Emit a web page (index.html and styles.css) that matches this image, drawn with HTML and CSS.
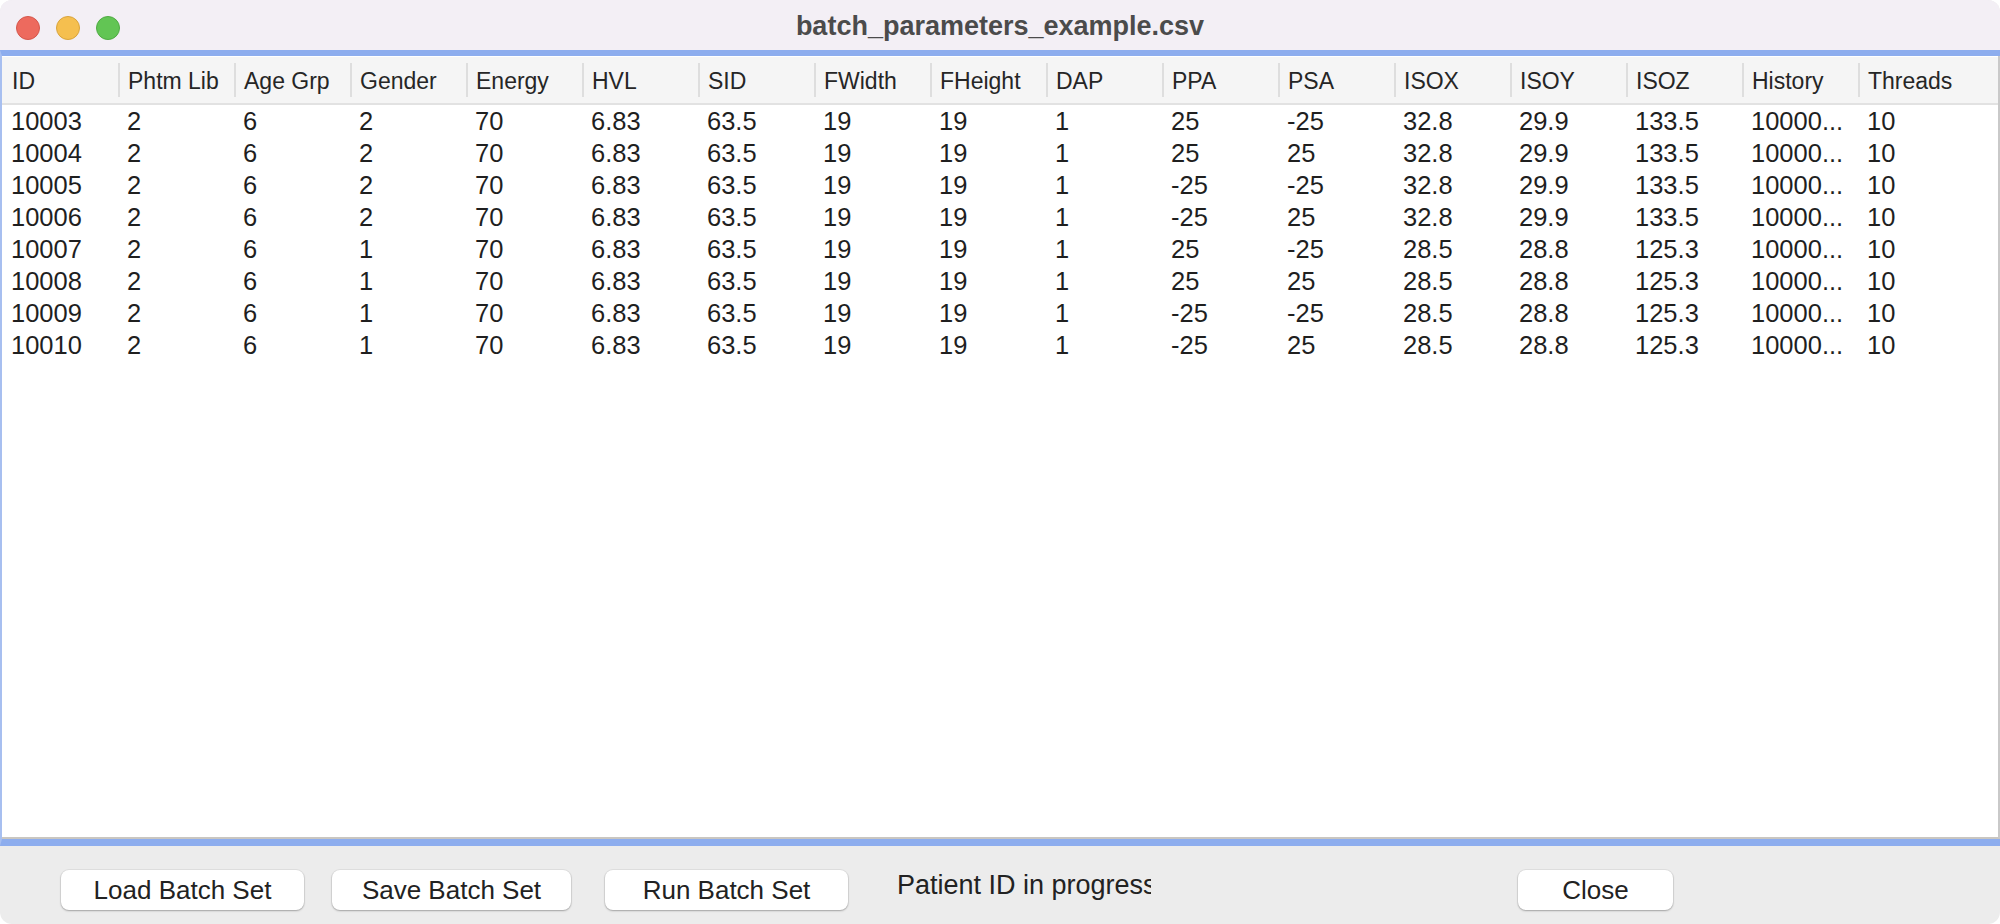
FILE: index.html
```html
<!DOCTYPE html>
<html>
<head>
<meta charset="utf-8">
<title>batch_parameters_example.csv</title>
<link rel="stylesheet" href="styles.css">
</head>
<body>
<div class="window">
  <div class="titlebar">
    <div class="lights">
      <span class="light red"></span>
      <span class="light yellow"></span>
      <span class="light green"></span>
    </div>
    <div class="title">batch_parameters_example.csv</div>
    <div></div>
  </div>
  <div class="tablewrap">
    <div class="table">
      <div class="row head">
        <div class="cell">ID</div><div class="cell">Phtm Lib</div><div class="cell">Age Grp</div><div class="cell">Gender</div><div class="cell">Energy</div><div class="cell">HVL</div><div class="cell">SID</div><div class="cell">FWidth</div><div class="cell">FHeight</div><div class="cell">DAP</div><div class="cell">PPA</div><div class="cell">PSA</div><div class="cell">ISOX</div><div class="cell">ISOY</div><div class="cell">ISOZ</div><div class="cell">History</div><div class="cell">Threads</div>
      </div>
      <div class="row"><div class="cell">10003</div><div class="cell">2</div><div class="cell">6</div><div class="cell">2</div><div class="cell">70</div><div class="cell">6.83</div><div class="cell">63.5</div><div class="cell">19</div><div class="cell">19</div><div class="cell">1</div><div class="cell">25</div><div class="cell">-25</div><div class="cell">32.8</div><div class="cell">29.9</div><div class="cell">133.5</div><div class="cell">10000...</div><div class="cell">10</div></div>
      <div class="row"><div class="cell">10004</div><div class="cell">2</div><div class="cell">6</div><div class="cell">2</div><div class="cell">70</div><div class="cell">6.83</div><div class="cell">63.5</div><div class="cell">19</div><div class="cell">19</div><div class="cell">1</div><div class="cell">25</div><div class="cell">25</div><div class="cell">32.8</div><div class="cell">29.9</div><div class="cell">133.5</div><div class="cell">10000...</div><div class="cell">10</div></div>
      <div class="row"><div class="cell">10005</div><div class="cell">2</div><div class="cell">6</div><div class="cell">2</div><div class="cell">70</div><div class="cell">6.83</div><div class="cell">63.5</div><div class="cell">19</div><div class="cell">19</div><div class="cell">1</div><div class="cell">-25</div><div class="cell">-25</div><div class="cell">32.8</div><div class="cell">29.9</div><div class="cell">133.5</div><div class="cell">10000...</div><div class="cell">10</div></div>
      <div class="row"><div class="cell">10006</div><div class="cell">2</div><div class="cell">6</div><div class="cell">2</div><div class="cell">70</div><div class="cell">6.83</div><div class="cell">63.5</div><div class="cell">19</div><div class="cell">19</div><div class="cell">1</div><div class="cell">-25</div><div class="cell">25</div><div class="cell">32.8</div><div class="cell">29.9</div><div class="cell">133.5</div><div class="cell">10000...</div><div class="cell">10</div></div>
      <div class="row"><div class="cell">10007</div><div class="cell">2</div><div class="cell">6</div><div class="cell">1</div><div class="cell">70</div><div class="cell">6.83</div><div class="cell">63.5</div><div class="cell">19</div><div class="cell">19</div><div class="cell">1</div><div class="cell">25</div><div class="cell">-25</div><div class="cell">28.5</div><div class="cell">28.8</div><div class="cell">125.3</div><div class="cell">10000...</div><div class="cell">10</div></div>
      <div class="row"><div class="cell">10008</div><div class="cell">2</div><div class="cell">6</div><div class="cell">1</div><div class="cell">70</div><div class="cell">6.83</div><div class="cell">63.5</div><div class="cell">19</div><div class="cell">19</div><div class="cell">1</div><div class="cell">25</div><div class="cell">25</div><div class="cell">28.5</div><div class="cell">28.8</div><div class="cell">125.3</div><div class="cell">10000...</div><div class="cell">10</div></div>
      <div class="row"><div class="cell">10009</div><div class="cell">2</div><div class="cell">6</div><div class="cell">1</div><div class="cell">70</div><div class="cell">6.83</div><div class="cell">63.5</div><div class="cell">19</div><div class="cell">19</div><div class="cell">1</div><div class="cell">-25</div><div class="cell">-25</div><div class="cell">28.5</div><div class="cell">28.8</div><div class="cell">125.3</div><div class="cell">10000...</div><div class="cell">10</div></div>
      <div class="row"><div class="cell">10010</div><div class="cell">2</div><div class="cell">6</div><div class="cell">1</div><div class="cell">70</div><div class="cell">6.83</div><div class="cell">63.5</div><div class="cell">19</div><div class="cell">19</div><div class="cell">1</div><div class="cell">-25</div><div class="cell">25</div><div class="cell">28.5</div><div class="cell">28.8</div><div class="cell">125.3</div><div class="cell">10000...</div><div class="cell">10</div></div>
    </div>
  </div>
  <div class="bottombar">
    <button class="btn btn-load">Load Batch Set</button>
    <button class="btn btn-save">Save Batch Set</button>
    <button class="btn btn-run">Run Batch Set</button>
    <div class="status">Patient ID in progress</div>
    <button class="btn btn-close">Close</button>
  </div>
</div>
</body>
</html>
```

FILE: styles.css
```css
html, body {
  margin: 0;
  padding: 0;
  background: #ffffff;
}

body {
  font-family: "Liberation Sans", Arial, sans-serif;
  color: #222222;
}

.window {
  width: 2000px;
  height: 924px;
  border-radius: 12px;
  overflow: hidden;
  background: #ececec;
  display: flex;
  flex-direction: column;
}

.titlebar {
  height: 50px;
  flex: 0 0 50px;
  background: #f3eff5;
  display: grid;
  grid-template-columns: 1fr auto 1fr;
  align-items: center;
}

.lights {
  display: flex;
  gap: 16px;
  padding-left: 16px;
  padding-top: 5px;
}

.light {
  width: 22px;
  height: 22px;
  border-radius: 50%;
  border: 1px solid rgba(0, 0, 0, 0.12);
}

.red { background: #ed6a5e; border-color: #d5574c; }
.yellow { background: #f5bf4f; border-color: #d9a43c; }
.green { background: #62c554; border-color: #4fab43; }

.title {
  font-weight: bold;
  font-size: 27px;
  color: #4b4b4b;
  padding-top: 2px;
}

.tablewrap {
  flex: 0 0 auto;
  height: 783px;
  border-top: 6px solid #8dadee;
  border-bottom: 7px solid #8dadee;
  border-left: 2px solid #a7bff0;
  display: flex;
}

.table {
  flex: 1;
  background: #ffffff;
  border-right: 2px solid #c9c9c9;
  border-bottom: 2px solid #c9c6c1;
}

.row {
  display: grid;
  grid-template-columns: repeat(16, 116px) 1fr;
  height: 32px;
  align-items: center;
  font-size: 25.5px;
  color: #1f1f1f;
}

.cell {
  padding-left: 9px;
  white-space: nowrap;
  overflow: hidden;
}

.head {
  height: 46px;
  margin-top: 1px;
  background: #f5f5f5;
  border-bottom: 2px solid #e2e2e2;
  font-size: 23px;
  color: #262626;
  align-items: stretch;
}

.head .cell {
  display: flex;
  align-items: center;
  padding-left: 10px;
  padding-top: 2px;
  background: linear-gradient(#dedede, #dedede) left center / 2px 34px no-repeat;
}

.head .cell:first-child {
  background: none;
}

.bottombar {
  flex: 1;
  display: flex;
  align-items: flex-start;
  padding-top: 24px;
  padding-left: 61px;
}

.btn {
  height: 40px;
  border: none;
  border-radius: 8px;
  background: #ffffff;
  box-shadow: 0 1px 2px rgba(0, 0, 0, 0.28), 0 0 0 1px rgba(0, 0, 0, 0.05);
  font-family: "Liberation Sans", Arial, sans-serif;
  font-size: 26px;
  color: #222222;
  padding: 0;
}

.btn-load { width: 243px; }
.btn-save { width: 239px; margin-left: 28px; }
.btn-run { width: 243px; margin-left: 34px; }
.btn-close { width: 155px; margin-left: 367px; }

.status {
  width: 254px;
  margin-left: 49px;
  margin-top: 0;
  font-size: 27px;
  color: #222222;
  white-space: nowrap;
  overflow: hidden;
}
```
